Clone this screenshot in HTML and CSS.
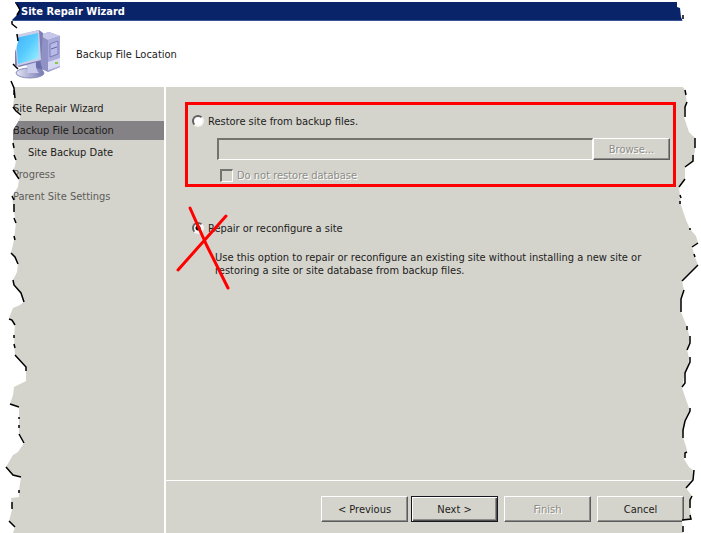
FILE: index.html
```html
<!DOCTYPE html>
<html lang="en">
  <head>
    <title>Site Repair Wizard</title>
    <meta charset="UTF-8" />
    <link rel="stylesheet" href="styles.css">
  </head>
  <body>
    <div class="wizard">
      <div class="titlebar">Site Repair Wizard</div>
      <header class="header">
        <svg class="computer" width="46" height="50" viewBox="0 0 46 50" aria-hidden="true">
          <defs>
            <linearGradient id="screen" x1="0" y1="0" x2="1" y2="1">
              <stop offset="0" stop-color="#3fb0fa" />
              <stop offset="0.5" stop-color="#58ccff" />
              <stop offset="1" stop-color="#a4f4ff" />
            </linearGradient>
            <linearGradient id="metal" x1="0" y1="0" x2="1" y2="0">
              <stop offset="0" stop-color="#e4e4f6" />
              <stop offset="1" stop-color="#7476b0" />
            </linearGradient>
          </defs>
          <path d="M24 6 L34 3 L45 7 V38 L33 43 L24 39 Z" fill="#9092c6" />
          <path d="M24 6 L34 3 L45 7 L33 11 Z" fill="#c6c8ea" />
          <path d="M33 11 L45 7 V38 L33 43 Z" fill="#a8aada" />
          <path d="M35 15 L43 12 V25 L35 28 Z" fill="#b8baea" stroke="#7c7eb4" />
          <path d="M36 20 L42 18" stroke="#6668a0" />
          <path d="M33 33 L45 29 V37 L33 41 Z" fill="#d8daf4" />
          <rect x="40" y="33" width="3" height="2" fill="#8cc840" />
          <path d="M13 34 L25 31 L28 43 L15 44 Z" fill="#6c6eac" />
          <ellipse cx="15" cy="44" rx="14" ry="5" fill="url(#metal)" stroke="#8a8cba" />
          <path d="M10 35 L21 33 Q20 40 24 44 L12 44 Q14 39 10 35 Z" fill="#c8caec" />
          <path d="M0 7 L24 1 L28 4 L26 32 L4 38 L0 36 Z" fill="#7c7eb4" />
          <path d="M0 6 L24 1 L26 31 L2 37 Z" fill="#cccee8" />
          <path d="M1 9 L23 4 L24 29 L3 35 Z" fill="url(#screen)" />
        </svg>
        <span>Backup File Location</span>
      </header>
      <div class="middle">
        <nav class="steps">
          <div class="step">Site Repair Wizard</div>
          <div class="step current">Backup File Location</div>
          <div class="step sub">Site Backup Date</div>
          <div class="step later">Progress</div>
          <div class="step later">Parent Site Settings</div>
        </nav>
        <div class="content">
          <main class="page">
            <div class="highlight">
              <div class="option">
                <input type="radio" name="mode" id="restore" />
                <label for="restore">Restore site from backup files.</label>
              </div>
              <div class="path">
                <input type="text" aria-label="Backup path" disabled />
                <button type="button" class="browse" disabled>Browse...</button>
              </div>
              <div class="option nodb">
                <input type="checkbox" id="nodb" disabled />
                <label for="nodb">Do not restore database</label>
              </div>
            </div>
            <div class="repair">
              <div class="option">
                <input type="radio" name="mode" id="repair" checked />
                <label for="repair">Repair or reconfigure a site</label>
              </div>
              <p class="hint">
                Use this option to repair or reconfigure an existing site without installing a new site or<br />
                restoring a site or site database from backup files.
              </p>
              <svg class="cross" width="54" height="84" viewBox="0 0 54 84" aria-hidden="true">
                <path d="M14 2 L31 40 L52 82 M2 64 L50 10" />
              </svg>
            </div>
          </main>
          <footer class="buttons">
            <div class="pair">
              <button type="button">&lt; Previous</button>
              <button type="button" class="default">Next &gt;</button>
            </div>
            <button type="button" disabled>Finish</button>
            <button type="button">Cancel</button>
          </footer>
        </div>
      </div>

      <!-- torn paper edges -->
      <svg class="torn left" width="30" height="533" viewBox="0 0 30 533" aria-hidden="true">
        <path class="paper" d="M0 0 H15 V3 L20 10 L16 16 L12 20 L17 27 L16 34 L18 42 L15 52 L13 64 L18 68 L14 74 L11 80 L15 90 L14 98 L13 107 L21 115 L18 122 L13 130 L13 143 L14 155 L16 160 L15 166 L13 170 L19 179 L18 187 L12 196 L14 212 L16 222 L14 240 L11 253 L18 264 L17 272 L13 280 L14 285 L21 293 L24 302 L20 305 L13 308 L9 318 L15 325 L14 337 L15 356 L26 367 L26 381 L14 387 L13 395 L10 404 L19 407 L19 434 L24 443 L18 452 L13 455 L6 467 L13 475 L21 477 L19 490 L19 497 L11 498 L12 510 L9 521 L15 527 L13 533 H0 Z" />
        <path class="ink" d="M17 4 L20 10 L17 15 M12 21 L12 24 L17 28 M17 34 L18 41 M13 64 L18 69 M11 81 L14 88 L15 98 M14 90 V95 M13 107 L16 111 L21 115 M13 143 L14 148 M14 155 L16 160 M13 170 L19 179 M12 196 L14 200 M14 204 V212 M14 218 L16 223 M14 236 L15 240 M11 253 L15 257 L18 264 M13 280 L14 285 L21 293 L24 302 M9 319 L12 320 L15 325 M14 335 V338 M14 344 L15 348 M15 355 L26 367 V371 M10 404 L19 407 M19 417 V419 M19 425 V428 M19 434 L24 443 M6 467 L13 475 L21 477 M19 490 V493 M12 502 L12 509 M9 521 L15 527" />
      </svg>
      <svg class="torn right" width="25" height="533" viewBox="0 0 25 533" aria-hidden="true">
        <path class="paper" d="M25 0 H1 V7 L4 8 L5 17 L7 22 L6 86 L9 90 L11 103 L8 110 L8 117 L13 132 L19 138 L19 150 L17 161 L9 167 L9 178 L3 187 L5 205 L10 220 L14 229 L20 236 L22 243 L16 247 L19 257 L22 265 L14 273 L6 281 L8 290 L5 299 L5 312 L11 327 L14 339 L11 350 L13 358 L12 367 L8 377 L6 388 L14 411 L9 420 L7 437 L11 450 L8 459 L13 467 L18 471 L17 481 L10 488 L16 496 L14 508 L15 519 L6 521 L7 533 H25 Z" />
        <path class="ink" d="M7 15 L7 19 M9 90 L10 95 M11 102 L9 107 V117 M19 138 V148 M17 155 V161 L9 167 M9 179 L3 187 M4 195 L5 198 M4 201 V204 M14 228 V230 M22 243 L16 247 M18 254 L19 257 M22 265 L14 273 L6 281 M8 290 L5 299 V312 M11 326 V330 M14 336 V343 L11 350 M14 357 V362 L9 373 V383 L6 387 M14 408 V411 L9 421 L7 430 V438 M11 452 L9 453 V458 M18 470 L17 480 L10 488 M16 496 L14 500 V508 M14 515 L15 519 L6 520 M7 526 V532" />
      </svg>
    </div>
  </body>
</html>
```
FILE: styles.css
```css
* {
  box-sizing: border-box;
}

body {
  margin: 0;
  background-color: #ffffff;
  color: #1c1c1c;
  font-family: Tahoma, "DejaVu Sans Condensed", sans-serif;
  font-size: 11px;
  line-height: 13px;
}

.wizard {
  position: relative;
  min-height: 100vh;
  padding-top: 2px;
  display: flex;
  flex-direction: column;
  overflow: hidden;
}

.titlebar {
  height: 19px;
  padding-left: 21px;
  background-color: #0a246a;
  border-bottom: 1px solid #3a5498;
  color: #ffffff;
  font-weight: bold;
  line-height: 19px;
}

.header {
  height: 66px;
  padding-left: 15px;
  display: flex;
  align-items: center;
  gap: 15px;
}

.middle {
  flex: 1;
  display: flex;
  background-color: #d5d4cc;
}

.steps {
  width: 166px;
  padding-top: 12px;
  display: flex;
  flex-direction: column;
  gap: 3px;
  border-right: 2px solid #ffffff;
}

.step {
  height: 19px;
  padding-left: 13px;
  line-height: 19px;
}

.step.current {
  background-color: #848284;
}

.step.sub {
  padding-left: 28px;
}

.step.later {
  color: #5c5c5a;
}

.content {
  flex: 1;
  display: flex;
  flex-direction: column;
}

.page {
  flex: 1;
  padding: 15px 25px 0 19px;
}

.highlight {
  padding: 9px 3px 2px 4px;
  border: 3px solid #ff0000;
}

.option {
  height: 14px;
  display: flex;
  align-items: center;
  gap: 4px;
}

input[type="radio"] {
  appearance: none;
  width: 12px;
  height: 12px;
  margin: 0;
  border: 2px solid;
  border-color: #606060 #f4f4f0 #f4f4f0 #606060;
  border-radius: 50%;
  background-color: #ffffff;
}

input[type="radio"]:checked {
  background: radial-gradient(circle, #000000 2px, #ffffff 3px);
}

.path {
  margin: 10px 0 8px 25px;
  display: flex;
}

.path input {
  flex: 1;
  min-width: 0;
  height: 22px;
  background-color: #d5d4cc;
  border: 2px solid;
  border-color: #74746f #ffffff #ffffff #74746f;
  border-right-width: 1px;
  border-bottom-width: 1px;
}

.nodb {
  margin-left: 28px;
}

input[type="checkbox"] {
  appearance: none;
  width: 13px;
  height: 13px;
  margin: 0;
  border: 2px solid;
  border-color: #74746f #ffffff #ffffff #74746f;
  border-right-width: 1px;
  border-bottom-width: 1px;
}

.nodb label,
button:disabled {
  color: #8c8c88;
  text-shadow: 1px 1px #ffffff;
}

button {
  width: 87px;
  height: 26px;
  padding: 0;
  background-color: #d5d4cc;
  border: 1px solid;
  border-color: #ffffff #5c5c5c #5c5c5c #ffffff;
  box-shadow: inset -1px -1px #8c8c88;
  color: #1c1c1c;
  font: inherit;
}

.browse {
  width: 77px;
  height: 22px;
}

.default {
  border-color: #181820;
  box-shadow: inset 1px 1px #ffffff, inset -1px -1px #505050, inset -2px -2px #8c8c88;
}

.repair {
  position: relative;
  margin-top: 34px;
  padding-left: 7px;
}

.hint {
  margin: 16px 0 0 23px;
  white-space: nowrap;
}

.cross {
  position: absolute;
  top: -15px;
  left: -9px;
  fill: none;
  stroke: #ff0000;
  stroke-width: 3;
  stroke-linecap: round;
}

.buttons {
  padding: 15px 17px 11px;
  display: flex;
  justify-content: flex-end;
  gap: 6px;
  border-top: 1px solid #ffffff;
}

.pair {
  display: flex;
  gap: 3px;
}

.torn {
  position: absolute;
  top: 0;
  pointer-events: none;
}

.left {
  left: 0;
}

.right {
  right: 0;
}

.paper {
  fill: #ffffff;
}

.ink {
  fill: none;
  stroke: #000000;
  stroke-width: 1.5;
}
```
